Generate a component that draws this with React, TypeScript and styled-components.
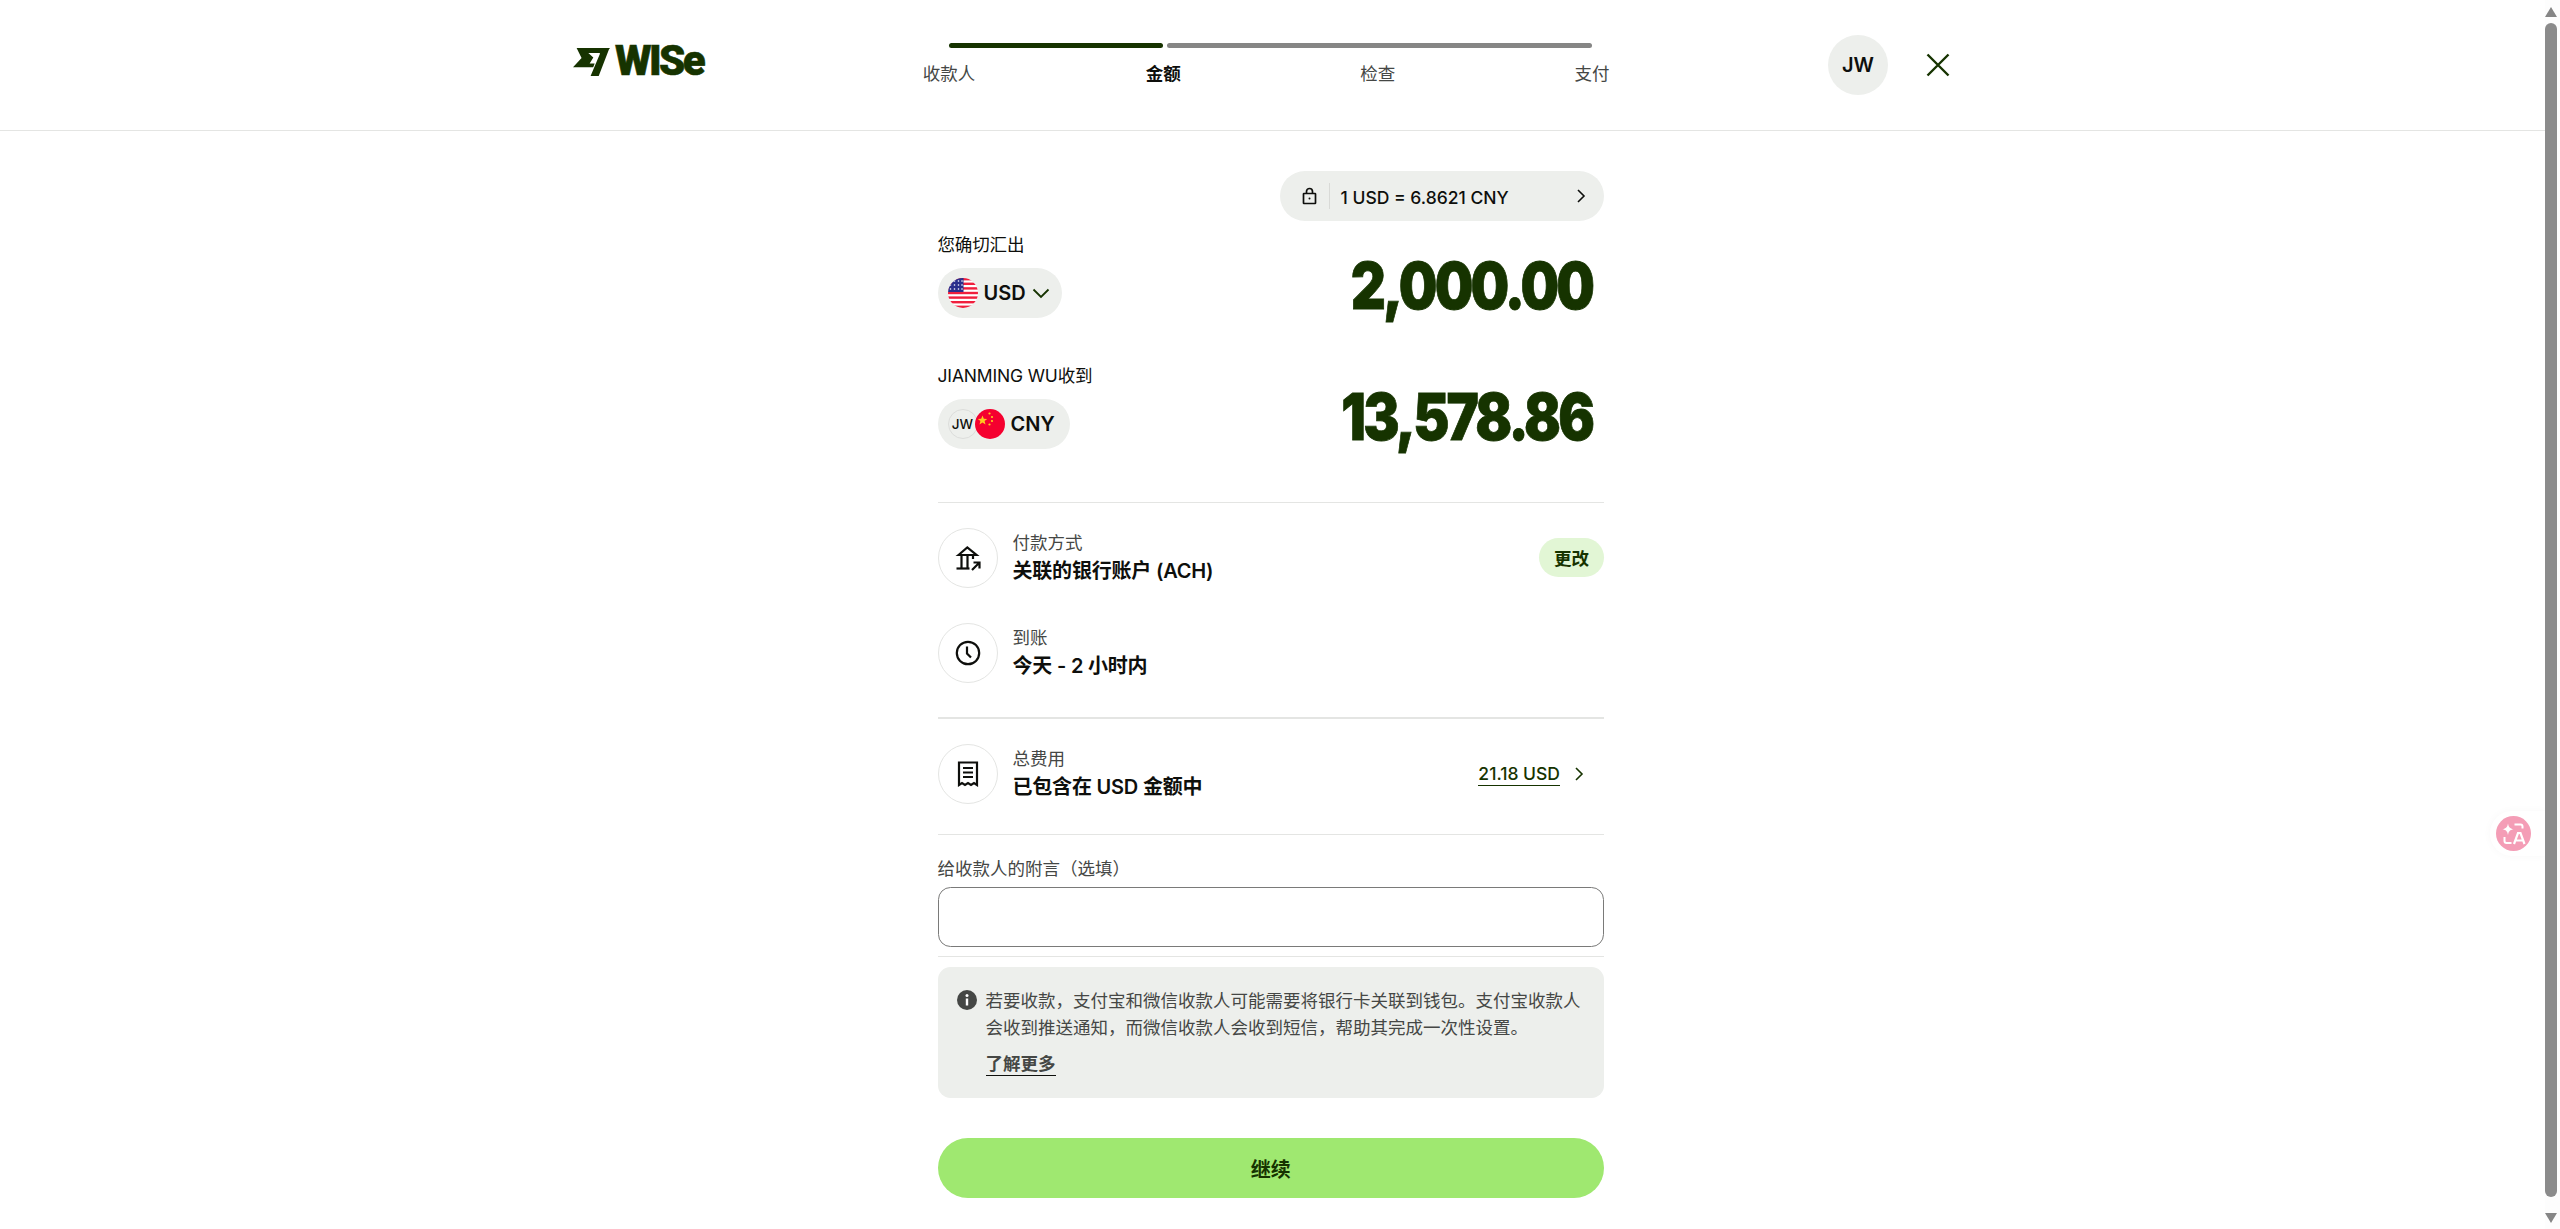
import React from "react";
import styled, { createGlobalStyle } from "styled-components";

const ink = "#0e0f0c";
const forest = "#163300";
const soft = "#454745";
const pale = "#edefec";
const line = "#e4e5e3";

const Global = createGlobalStyle`
  html, body { margin: 0; height: 100%; overflow: hidden; background: #fff; }
  body { font-family: Inter, "Noto Sans CJK SC", sans-serif; color: ${ink}; }
  * { box-sizing: border-box; }
`;

const Header = styled.header`
  height: 131px;
  display: flex;
  align-items: flex-start;
  padding-left: 573px;
  border-bottom: 1.25px solid ${line};
`;
const Logo = styled.div`
  width: 326px;
  height: 30px;
  margin-top: 46px;
  display: flex;
  align-items: center;
  gap: 5px;
  color: ${forest};
`;
const Wordmark = styled.span`
  font-family: Roboto, sans-serif;
  font-size: 42px;
  line-height: 30px;
  font-weight: 900;
  letter-spacing: -2.6px;
  -webkit-text-stroke: 0.6px ${forest};
`;
const Stepper = styled.nav`
  width: 743px;
  padding-top: 43px;
  display: flex;
  flex-direction: column;
`;
const Bars = styled.div`
  display: flex;
  gap: 4px;
  padding: 0 50px;
`;
const Bar = styled.div<{ $done?: boolean; $grow: number }>`
  height: 5px;
  border-radius: 3px;
  flex: ${(p) => p.$grow} 0 0;
  background: ${(p) => (p.$done ? forest : "#868685")};
`;
const Steps = styled.div`
  display: flex;
  justify-content: space-between;
  margin-top: 14px;
`;
const Step = styled.div<{ $active?: boolean }>`
  width: 100px;
  text-align: center;
  font-size: 17.5px;
  line-height: 24px;
  font-weight: ${(p) => (p.$active ? 600 : 400)};
  color: ${(p) => (p.$active ? ink : soft)};
`;
const Avatar = styled.div`
  width: 60px;
  height: 60px;
  margin: 35px 0 0 186px;
  border-radius: 50%;
  background: ${pale};
  display: flex;
  align-items: center;
  justify-content: center;
  font-size: 20px;
  font-weight: 600;
`;
const Close = styled.div`
  margin: 50px 0 0 35px;
  width: 30px;
  height: 30px;
  color: ${forest};
`;

const Main = styled.main`
  width: 666.5px;
  margin-left: 937.5px;
  display: flex;
  flex-direction: column;
`;
const RateRow = styled.div`
  display: flex;
  justify-content: flex-end;
  padding-top: 40px;
`;
const RatePill = styled.div`
  width: 324.5px;
  height: 50px;
  border-radius: 25px;
  background: ${pale};
  display: flex;
  align-items: center;
  padding: 0 17px 0 22px;
  font-size: 17.5px;
  font-weight: 500;
  line-height: 24px;
`;
const RateSep = styled.span`
  width: 1px;
  height: 26px;
  background: #d9dad7;
  margin: 0 11px 0 12px;
`;
const RateText = styled.span`
  flex: 1;
  padding-top: 3px;
`;
const AmountBlock = styled.section<{ $top: number }>`
  margin-top: ${(p) => p.$top}px;
  display: flex;
  justify-content: space-between;
  align-items: flex-start;
`;
const AmountSide = styled.div`
  display: flex;
  flex-direction: column;
  align-items: flex-start;
`;
const SmallLabel = styled.div`
  font-size: 17.5px;
  line-height: 24px;
  letter-spacing: -0.15px;
  color: ${ink};
`;
const CurrencyPill = styled.div`
  margin-top: 11px;
  height: 50px;
  border-radius: 25px;
  background: ${pale};
  display: flex;
  align-items: center;
  padding: 0 15px 0 10px;
  font-size: 20px;
  font-weight: 600;
`;
const CurrencyCode = styled.span`
  margin-left: 6px;
`;
const Chevron = styled.span`
  display: flex;
  margin: 0 -3px 0 6px;
  color: ${forest};
`;
const MiniAvatar = styled.span`
  width: 30px;
  height: 30px;
  border-radius: 50%;
  border: 1.25px solid #dcdddb;
  display: flex;
  align-items: center;
  justify-content: center;
  font-size: 13.5px;
  font-weight: 500;
  margin-right: -3px;
`;
const Amount = styled.div`
  font-family: Inter, sans-serif;
  font-weight: 900;
  font-size: 64px;
  line-height: 64px;
  letter-spacing: -3.3px;
  color: ${forest};
  padding-right: 14px;
  margin-top: 21px;
  transform: scaleX(0.85);
  transform-origin: 100% 50%;
  -webkit-text-stroke: 0.8px ${forest};
`;
const Divider = styled.hr<{ $top: number; $bottom: number }>`
  border: 0;
  height: 1.25px;
  background: ${line};
  margin: ${(p) => p.$top}px 0 ${(p) => p.$bottom}px;
`;
const InfoRow = styled.div`
  height: 60px;
  display: flex;
  align-items: center;
  & + & {
    margin-top: 35px;
  }
`;
const IconCircle = styled.div`
  width: 60px;
  height: 60px;
  border-radius: 50%;
  border: 1.25px solid ${line};
  display: flex;
  align-items: center;
  justify-content: center;
  flex: none;
`;
const InfoText = styled.div`
  flex: 1;
  margin-left: 15px;
`;
const InfoLabel = styled.div`
  font-size: 17.5px;
  line-height: 26px;
  color: ${soft};
`;
const InfoValue = styled.div`
  font-size: 20px;
  line-height: 30px;
  font-weight: 600;
  letter-spacing: -0.2px;
`;
const ChangeButton = styled.div`
  width: 65px;
  height: 39px;
  margin-bottom: 2px;
  border-radius: 20px;
  background: #e2f6d5;
  color: ${forest};
  display: flex;
  align-items: center;
  justify-content: center;
  font-size: 17.5px;
  font-weight: 600;
`;
const FeeLink = styled.div`
  display: flex;
  align-items: center;
  color: ${forest};
  padding-right: 19px;
  gap: 13px;
`;
const FeeAmount = styled.span`
  font-size: 17.5px;
  line-height: 22px;
  font-weight: 500;
  border-bottom: 1.25px solid ${forest};
  margin-top: 1px;
`;
const FieldLabel = styled.div`
  font-size: 17.5px;
  line-height: 24px;
  color: ${soft};
`;
const Input = styled.div`
  margin-top: 6px;
  height: 60px;
  border: 1.25px solid #7a7a79;
  border-radius: 12.5px;
`;
const Notice = styled.div`
  height: 131px;
  border-radius: 12.5px;
  background: ${pale};
  padding: 20px 20px 0 19px;
  display: flex;
  gap: 9px;
`;
const NoticeIcon = styled.div`
  flex: none;
  height: 20px;
  margin-top: 3px;
`;
const NoticeBody = styled.div`
  font-size: 17.5px;
  line-height: 27px;
  color: ${soft};
`;
const NoticeLink = styled.div`
  display: table;
  margin-top: 12px;
  font-weight: 600;
  line-height: 22px;
  border-bottom: 1.25px solid ${ink};
`;
const Continue = styled.div`
  margin-top: 40px;
  height: 60px;
  border-radius: 30px;
  background: #9fe870;
  color: ${forest};
  display: flex;
  align-items: center;
  justify-content: center;
  font-size: 20px;
  font-weight: 600;
`;

const TranslateTab = styled.div`
  position: fixed;
  left: 2490px;
  top: 811px;
  width: 55px;
  height: 45px;
  padding: 5px 0 0 6px;
  border-radius: 23px 0 0 23px;
  background: #fff;
  box-shadow: 0 0 8px rgba(0, 0, 0, 0.03);
`;
const ScrollTrack = styled.div`
  position: fixed;
  top: 0;
  right: 0;
  bottom: 0;
  width: 15px;
  background: #fdfdfd;
  display: flex;
  flex-direction: column;
  align-items: flex-start;
`;
const ScrollArrow = styled.div`
  height: 23px;
  width: 12px;
  flex: none;
  display: flex;
  align-items: center;
  justify-content: center;
  color: #868686;
`;
const ScrollThumb = styled.div`
  flex: 1;
  width: 12px;
  border-radius: 6px;
  background: #8b8b8b;
  margin-bottom: 9px;
`;

const Flag = ({ id }: { id: "us" | "cn" }) =>
  id === "us" ? (
    <svg width="30" height="30" viewBox="0 0 30 30">
      <defs>
        <clipPath id="fus"><circle cx="15" cy="15" r="15" /></clipPath>
      </defs>
      <g clipPath="url(#fus)">
        <rect width="30" height="30" fill="#fff" />
        {[0, 4.6, 9.2, 13.8, 18.4, 23, 27.6].map((y) => (
          <rect key={y} y={y} width="30" height="2.4" fill="#f01f3d" />
        ))}
        <rect width="15.5" height="14" fill="#2b2f8c" />
        {[3, 7, 11].map((y) =>
          [2.5, 6.5, 10.5, 14].map((x) => <circle key={`${x}-${y}`} cx={x} cy={y} r="0.8" fill="#fff" />)
        )}
      </g>
    </svg>
  ) : (
    <svg width="30" height="30" viewBox="0 0 30 30">
      <circle cx="15" cy="15" r="15" fill="#f5002f" />
      <path d="M7.500 6.500l1.300 3.200 3.400.2-2.600 2.200.9 3.300-3-1.900-3 1.900.9-3.300-2.600-2.200 3.400-.2z" fill="#ffc91f" />
      <circle cx="14.500" cy="4.500" r="1.100" fill="#ffc91f" />
      <circle cx="17" cy="8" r="1.100" fill="#ffc91f" />
      <circle cx="17" cy="12" r="1.100" fill="#ffc91f" />
      <circle cx="14.500" cy="15.500" r="1.100" fill="#ffc91f" />
    </svg>
  );

const SmallChevron = () => (
  <svg width="12" height="16" viewBox="0 0 12 16" fill="none" stroke="currentColor" strokeWidth="1.6">
    <path d="M3 2l6 6-6 6" />
  </svg>
);

export default function App() {
  return (
    <>
      <Global />
      <Header>
        <Logo>
          <svg width="37" height="29" viewBox="0 0 41 29" preserveAspectRatio="none" fill="currentColor">
            <path d="M4 1h37l-1.200 1.600L28.500 29h-9L30 6.500l-.8-.6H17l5.500 4.600-4 6H24l-1.600 3.700H0l9.500-9.200z" />
          </svg>
          <Wordmark>WISe</Wordmark>
        </Logo>
        <Stepper>
          <Bars>
            <Bar $done $grow={214} />
            <Bar $grow={425} />
          </Bars>
          <Steps>
            <Step>收款人</Step>
            <Step $active>金额</Step>
            <Step>检查</Step>
            <Step>支付</Step>
          </Steps>
        </Stepper>
        <Avatar>JW</Avatar>
        <Close>
          <svg width="30" height="30" viewBox="0 0 30 30" fill="none" stroke="currentColor" strokeWidth="2.4">
            <path d="M4.500 4.500l21 21M25.500 4.500l-21 21" />
          </svg>
        </Close>
      </Header>
      <Main>
        <RateRow>
          <RatePill>
            <svg width="15" height="18" viewBox="0 0 15 18" fill="none" stroke={ink} strokeWidth="1.7">
              <rect x="1.500" y="6.500" width="12" height="10" rx="0.5" />
              <path d="M4.500 6.500V4.500a3 3 0 0 1 6 0v2" />
              <circle cx="7.500" cy="11.500" r="1" fill={ink} stroke="none" />
            </svg>
            <RateSep />
            <RateText>1 USD = 6.8621 CNY</RateText>
            <SmallChevron />
          </RatePill>
        </RateRow>
        <AmountBlock $top={12}>
          <AmountSide>
            <SmallLabel>您确切汇出</SmallLabel>
            <CurrencyPill>
              <Flag id="us" />
              <CurrencyCode>USD</CurrencyCode>
              <Chevron>
                <svg width="18" height="12" viewBox="0 0 18 12" fill="none" stroke="currentColor" strokeWidth="1.8">
                  <path d="M1.500 2.500L9 10l7.500-7.500" />
                </svg>
              </Chevron>
            </CurrencyPill>
          </AmountSide>
          <Amount>2,000.00</Amount>
        </AmountBlock>
        <AmountBlock $top={46}>
          <AmountSide>
            <SmallLabel>JIANMING WU收到</SmallLabel>
            <CurrencyPill>
              <MiniAvatar>JW</MiniAvatar>
              <Flag id="cn" />
              <CurrencyCode>CNY</CurrencyCode>
            </CurrencyPill>
          </AmountSide>
          <Amount>13,578.86</Amount>
        </AmountBlock>
        <Divider $top={53} $bottom={25} />
        <InfoRow>
          <IconCircle>
            <svg width="26" height="26" viewBox="0 0 26 26" fill="none" stroke={ink} strokeWidth="2.2">
              <path d="M3.500 10L12.300 2.500 21.500 10z" />
              <path d="M6.500 10v13M12.500 10v13M18 10v4" />
              <path d="M1.500 23.500h13" />
              <path d="M17 25l7-7M18.500 17.500h6v6" />
            </svg>
          </IconCircle>
          <InfoText>
            <InfoLabel>付款方式</InfoLabel>
            <InfoValue>关联的银行账户 (ACH)</InfoValue>
          </InfoText>
          <ChangeButton>更改</ChangeButton>
        </InfoRow>
        <InfoRow>
          <IconCircle>
            <svg width="26" height="26" viewBox="0 0 26 26" fill="none" stroke={ink} strokeWidth="2.2">
              <circle cx="13" cy="13" r="11.200" />
              <path d="M12 6.500v7l4 4" />
            </svg>
          </IconCircle>
          <InfoText>
            <InfoLabel>到账</InfoLabel>
            <InfoValue>今天 - 2 小时内</InfoValue>
          </InfoText>
        </InfoRow>
        <Divider $top={34} $bottom={25} />
        <InfoRow>
          <IconCircle>
            <svg width="22" height="26" viewBox="0 0 22 26" fill="none" stroke={ink} strokeWidth="2.2">
              <path d="M2 24V1.500h18V24l-3-2-3 2-3-2-3 2-3-2z" />
              <path d="M6 7h10M6 11.500h10M6 16h10" />
            </svg>
          </IconCircle>
          <InfoText>
            <InfoLabel>总费用</InfoLabel>
            <InfoValue>已包含在 USD 金额中</InfoValue>
          </InfoText>
          <FeeLink>
            <FeeAmount>21.18 USD</FeeAmount>
            <SmallChevron />
          </FeeLink>
        </InfoRow>
        <Divider $top={30} $bottom={22} />
        <FieldLabel>给收款人的附言（选填）</FieldLabel>
        <Input />
        <Divider $top={9} $bottom={10} />
        <Notice>
          <NoticeIcon>
            <svg width="20" height="20" viewBox="0 0 20 20">
              <circle cx="10" cy="10" r="10" fill={soft} />
              <rect x="8.800" y="8.500" width="2.400" height="7" fill="#fff" />
              <circle cx="10" cy="5.600" r="1.500" fill="#fff" />
            </svg>
          </NoticeIcon>
          <NoticeBody>
            若要收款，支付宝和微信收款人可能需要将银行卡关联到钱包。支付宝收款人会收到推送通知，而微信收款人会收到短信，帮助其完成一次性设置。
            <NoticeLink>了解更多</NoticeLink>
          </NoticeBody>
        </Notice>
        <Continue>继续</Continue>
      </Main>
      <TranslateTab>
        <svg width="35" height="35" viewBox="0 0 35 35">
          <circle cx="17.500" cy="17.500" r="17.500" fill="#f49db6" />
          <path d="M12 7.500c.7 3.800 1.900 5 5.500 5.700-3.600.7-4.800 1.900-5.500 5.700-.7-3.800-1.900-5-5.500-5.700 3.600-.7 4.800-1.900 5.500-5.700z" fill="#fff" />
          <path d="M18.500 8.500h6a2 2 0 0 1 2 2v2M8.500 21v4a2 2 0 0 0 2 2h5" fill="none" stroke="#fff" strokeWidth="2" />
          <path d="M18 28l4-11h2.500l4 11M19.800 24.500h7" fill="none" stroke="#fff" strokeWidth="2.200" />
        </svg>
      </TranslateTab>
      <ScrollTrack>
        <ScrollArrow>
          <svg width="12" height="10" viewBox="0 0 12 10" fill="currentColor"><path d="M6 0l6 10H0z" /></svg>
        </ScrollArrow>
        <ScrollThumb />
        <ScrollArrow>
          <svg width="12" height="10" viewBox="0 0 12 10" fill="currentColor"><path d="M0 0h12L6 10z" /></svg>
        </ScrollArrow>
      </ScrollTrack>
    </>
  );
}
